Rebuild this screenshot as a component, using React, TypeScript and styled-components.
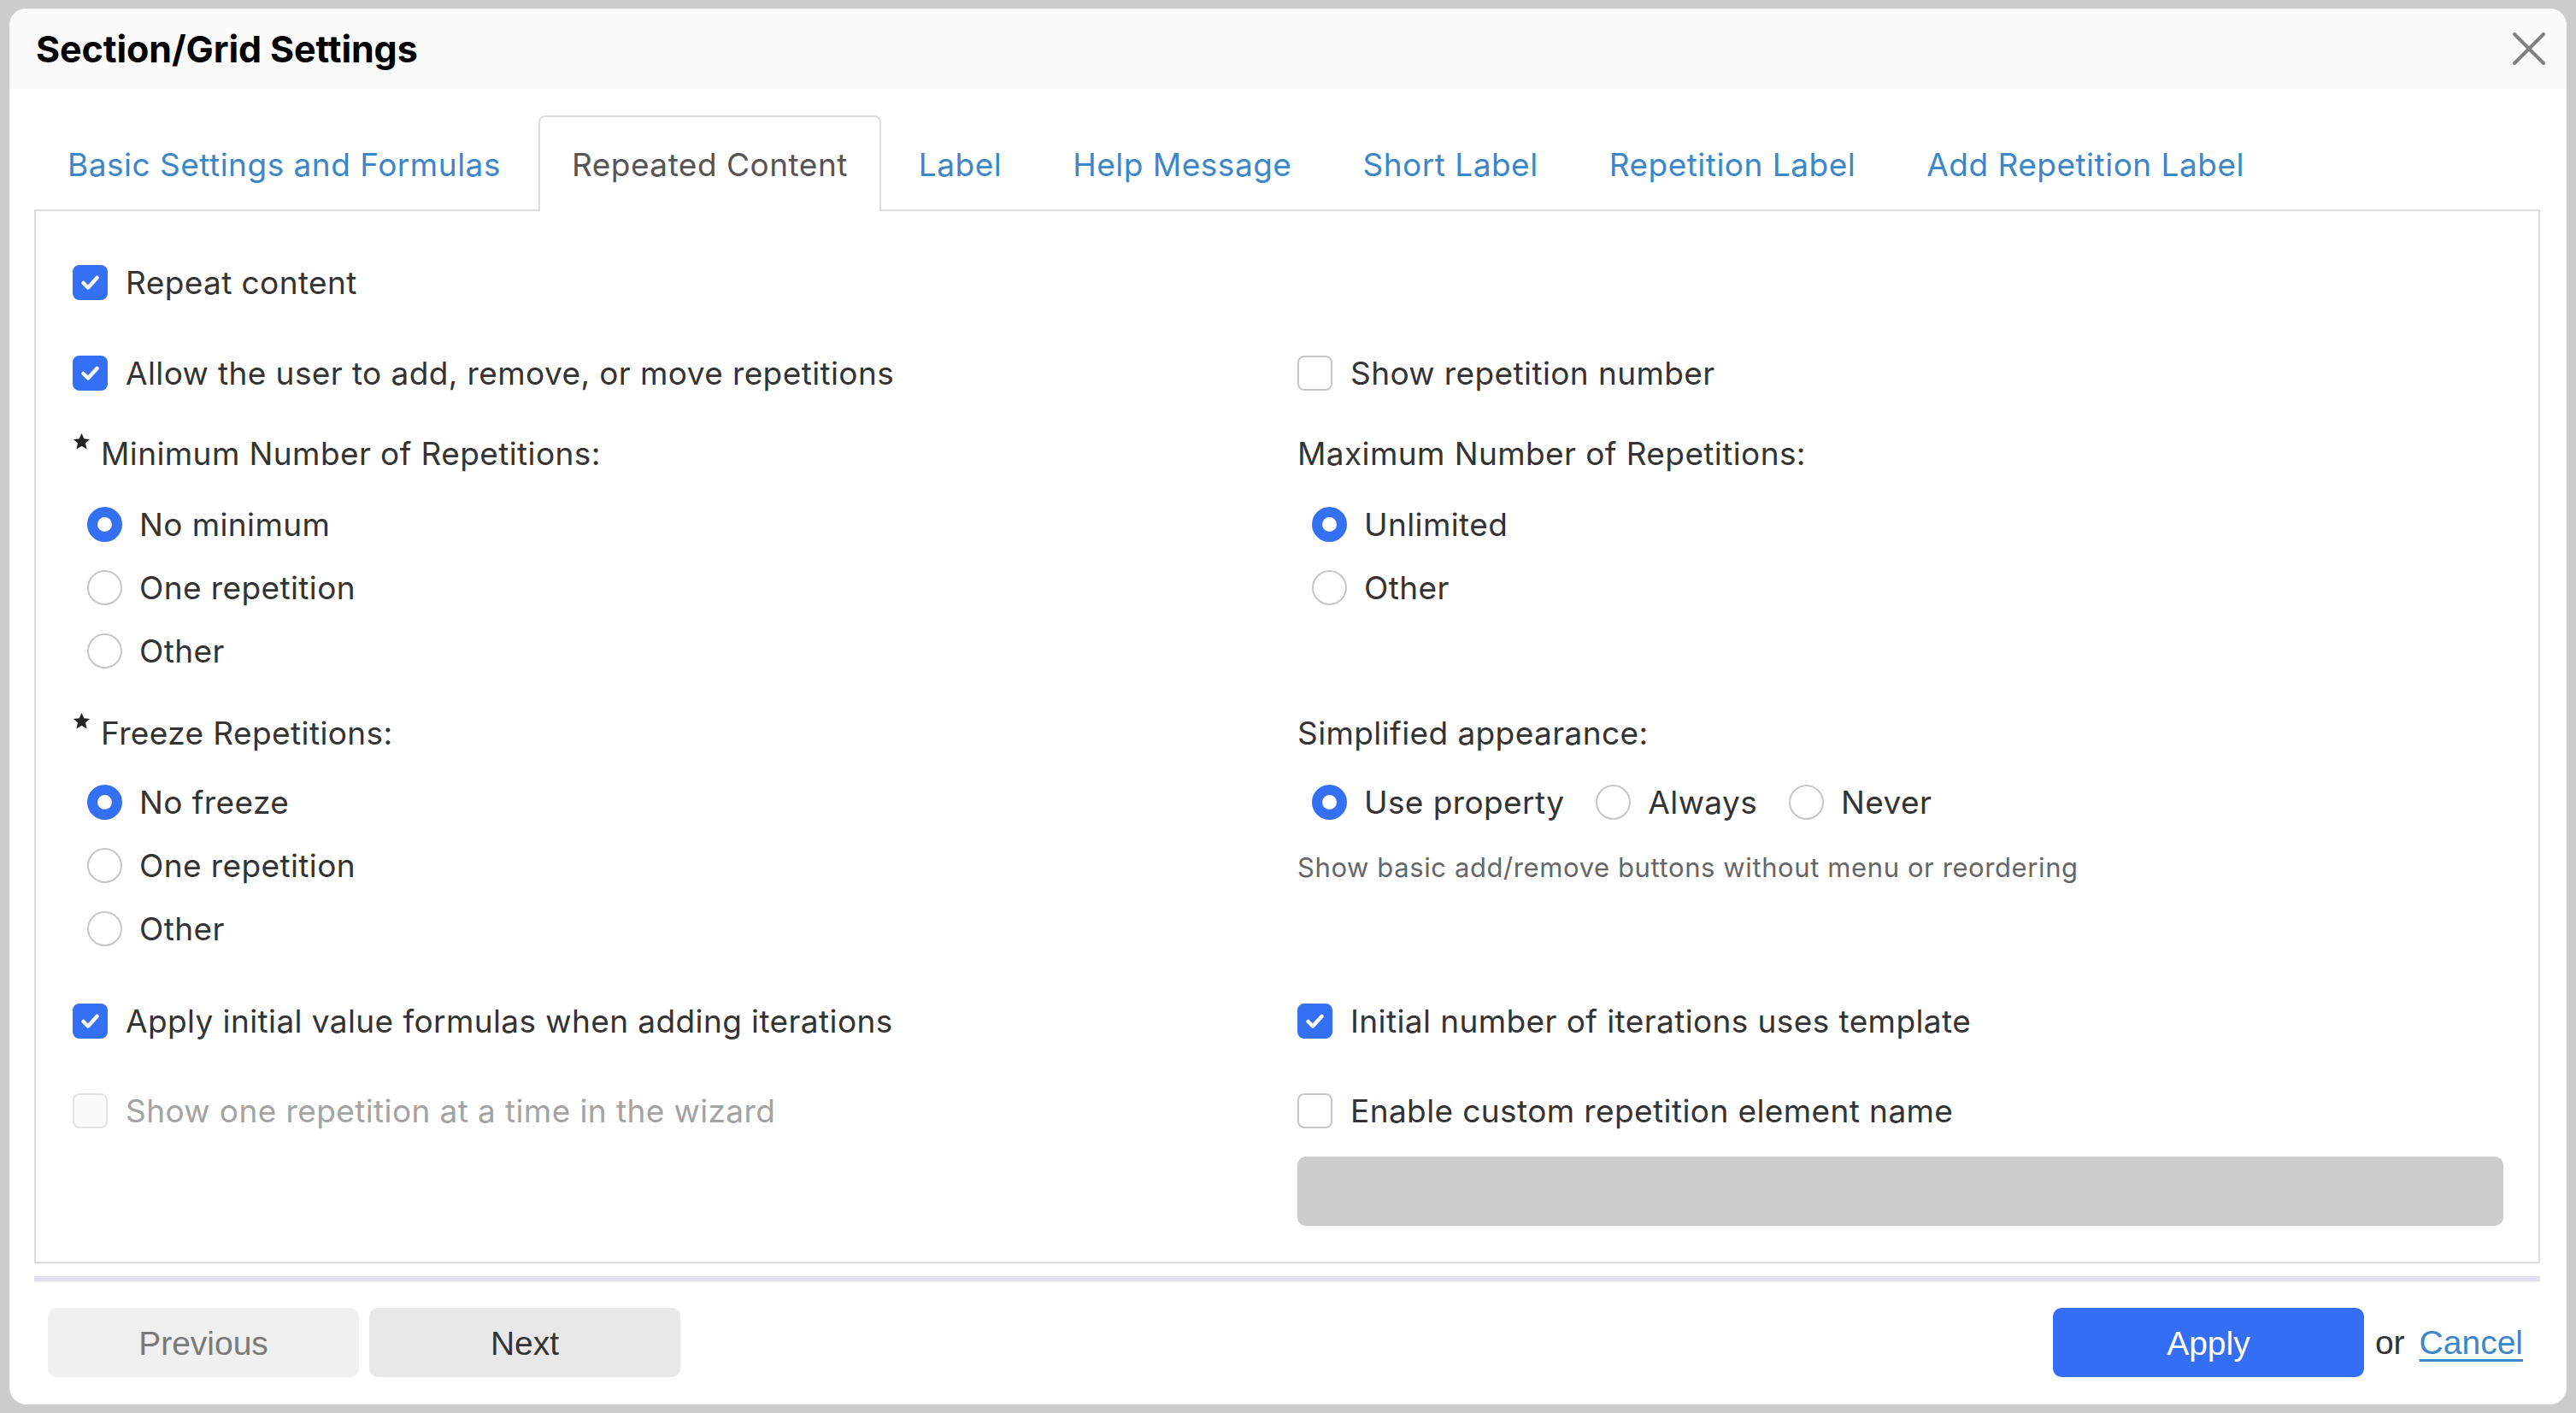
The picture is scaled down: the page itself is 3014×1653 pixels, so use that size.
import React from "react";
import styled, { createGlobalStyle, css } from "styled-components";

const GlobalStyle = createGlobalStyle`
  html, body { margin: 0; padding: 0; background: #cccccc; }
  body { font-family: Inter, "Noto Sans", "DejaVu Sans", sans-serif; color: #333; }
  * { box-sizing: border-box; }
`;

const BLUE = "#3470f4";

const textBase = css`
  font-size: 37px;
  letter-spacing: 0.4px;
`;

const Page = styled.div`
  padding: 10px 11px;
`;

const Dialog = styled.div`
  background: #ffffff;
  border-radius: 20px;
  overflow: hidden;
`;

const Header = styled.div`
  height: 94px;
  background: #fafafa;
  display: flex;
  align-items: center;
  justify-content: space-between;
  padding: 0 25px 0 31px;
`;

const Title = styled.h1`
  margin: 0;
  font-size: 43px;
  font-weight: 700;
  color: #000;
  letter-spacing: -0.1px;
`;

const CloseButton = styled.button`
  width: 38px;
  height: 38px;
  padding: 0;
  border: none;
  background: none;
  display: flex;
`;

const Body = styled.div`
  padding: 31px 31px 0 29px;
`;

const TabBar = styled.div`
  display: flex;
  gap: 5px;
  margin-bottom: -2px;
  position: relative;
  z-index: 1;
`;

const Tab = styled.div<{ $active?: boolean }>`
  height: 112px;
  padding: 0 37px;
  display: flex;
  align-items: center;
  ${textBase};
  letter-spacing: 0.5px;
  border: 2px solid transparent;
  border-bottom: none;
  border-radius: 8px 8px 0 0;
  color: #3b87c9;
  ${(p) =>
    p.$active &&
    css`
      border-color: #dddddd;
      background: #ffffff;
      color: #555555;
    `}
`;

const Panel = styled.div`
  border: 2px solid #dddddd;
  padding: 58px 41px 42px 43px;
`;

const Row = styled.div<{ $mt?: number }>`
  display: grid;
  grid-template-columns: 1fr 1fr;
  column-gap: 22px;
  margin-top: ${(p) => p.$mt ?? 0}px;
`;

const Cell = styled.div`
  display: flex;
  flex-direction: column;
  min-width: 0;
`;

const CheckLabel = styled.label<{ $disabled?: boolean }>`
  display: flex;
  align-items: center;
  gap: 21px;
  height: 50px;
  ${textBase};
  color: ${(p) => (p.$disabled ? "#a3a3a3" : "#333333")};
`;

const Box = styled.span<{ $checked?: boolean; $disabled?: boolean }>`
  width: 41px;
  height: 41px;
  flex: none;
  border-radius: 8px;
  display: flex;
  align-items: center;
  justify-content: center;
  background: ${(p) => (p.$checked ? BLUE : p.$disabled ? "#fbfbfb" : "#ffffff")};
  border: ${(p) =>
    p.$checked ? "none" : p.$disabled ? "2px solid #e4e4e4" : "2px solid #c6c6c6"};
`;

const GroupLabel = styled.div`
  display: flex;
  align-items: center;
  gap: 12px;
  height: 50px;
  ${textBase};
  color: #333333;
`;

const StarMark = styled.svg`
  width: 21px;
  height: 21px;
  flex: none;
  align-self: flex-start;
  margin-top: 1px;
`;

const RadioList = styled.div<{ $mt: number; $inline?: boolean }>`
  display: flex;
  flex-direction: ${(p) => (p.$inline ? "row" : "column")};
  gap: ${(p) => (p.$inline ? 37 : 24)}px;
  margin-top: ${(p) => p.$mt}px;
  padding-left: 17px;
`;

const RadioLabel = styled.label`
  display: flex;
  align-items: center;
  gap: 20px;
  height: 50px;
  ${textBase};
  color: #333333;
`;

const Dot = styled.span<{ $checked?: boolean }>`
  width: 41px;
  height: 41px;
  flex: none;
  border-radius: 50%;
  background: #ffffff;
  border: ${(p) => (p.$checked ? `12.5px solid ${BLUE}` : "2px solid #c6c6c6")};
`;

const Hint = styled.div`
  margin-top: 32px;
  font-size: 31px;
  letter-spacing: 0.6px;
  line-height: 40px;
  color: #666666;
`;

const NameInput = styled.input`
  margin-top: 29px;
  width: 100%;
  height: 81px;
  border: none;
  border-radius: 10px;
  background: #cccccc;
`;

const Divider = styled.div`
  margin-top: 15px;
  height: 6px;
  background: #e0e0f0;
`;

const Footer = styled.div`
  display: flex;
  align-items: center;
  justify-content: space-between;
  padding: 31px 20px 32px 16px;
`;

const ButtonGroup = styled.div`
  display: flex;
  align-items: center;
  gap: 12px;
`;

const Button = styled.button<{ $variant: "muted" | "plain" | "primary" }>`
  width: 364px;
  height: 81px;
  padding-top: 3px;
  border: none;
  border-radius: 10px;
  font-family: "Liberation Sans", Arial, sans-serif;
  font-size: 39px;
  ${(p) =>
    p.$variant === "muted"
      ? css`
          background: #f0f0f0;
          color: #7a7a7a;
        `
      : p.$variant === "plain"
      ? css`
          background: #e8e8e8;
          color: #333333;
        `
      : css`
          background: #346ef4;
          color: #ffffff;
        `}
`;

const Actions = styled.div`
  display: flex;
  align-items: center;
  gap: 13px;
  font-family: "Liberation Sans", Arial, sans-serif;
  font-size: 39px;
`;

const OrText = styled.span`
  color: #333333;
  margin-right: 4px;
`;

const CancelLink = styled.a`
  color: #3b87c9;
  text-decoration: underline;
  text-underline-offset: 6px;
  text-decoration-thickness: 3px;
`;

const CheckMark = () => (
  <svg width="41" height="41" viewBox="0 0 41 41">
    <path
      d="M12.5 21 L18 26.5 L28.5 15"
      fill="none"
      stroke="#fff"
      strokeWidth="4.5"
      strokeLinecap="round"
      strokeLinejoin="round"
    />
  </svg>
);

const Check: React.FC<{ label: string; checked?: boolean; disabled?: boolean }> = ({
  label,
  checked,
  disabled,
}) => (
  <CheckLabel $disabled={disabled}>
    <Box $checked={checked} $disabled={disabled}>
      {checked && <CheckMark />}
    </Box>
    {label}
  </CheckLabel>
);

const Radio: React.FC<{ label: string; checked?: boolean }> = ({ label, checked }) => (
  <RadioLabel>
    <Dot $checked={checked} />
    {label}
  </RadioLabel>
);

const Star = () => (
  <StarMark viewBox="0 0 24 24">
    <path
      d="M12 1 L15.2 8.3 L23 9 L17.1 14.3 L18.9 22.2 L12 18.1 L5.1 22.2 L6.9 14.3 L1 9 L8.8 8.3 Z"
      fill="#222"
    />
  </StarMark>
);

const tabs = [
  "Basic Settings and Formulas",
  "Repeated Content",
  "Label",
  "Help Message",
  "Short Label",
  "Repetition Label",
  "Add Repetition Label",
];

export default function App() {
  return (
    <>
      <GlobalStyle />
      <Page>
        <Dialog>
          <Header>
            <Title>Section/Grid Settings</Title>
            <CloseButton aria-label="Close">
              <svg width="38" height="38" viewBox="0 0 38 38">
                <path
                  d="M2 2 L36 36 M36 2 L2 36"
                  stroke="#808080"
                  strokeWidth="4"
                  strokeLinecap="round"
                />
              </svg>
            </CloseButton>
          </Header>
          <Body>
            <TabBar>
              {tabs.map((t) => (
                <Tab key={t} $active={t === "Repeated Content"}>
                  {t}
                </Tab>
              ))}
            </TabBar>
            <Panel>
              <Row>
                <Cell>
                  <Check label="Repeat content" checked />
                </Cell>
              </Row>
              <Row $mt={56}>
                <Cell>
                  <Check label="Allow the user to add, remove, or move repetitions" checked />
                </Cell>
                <Cell>
                  <Check label="Show repetition number" />
                </Cell>
              </Row>
              <Row $mt={44}>
                <Cell>
                  <GroupLabel>
                    <Star />
                    Minimum Number of Repetitions:
                  </GroupLabel>
                  <RadioList $mt={33}>
                    <Radio label="No minimum" checked />
                    <Radio label="One repetition" />
                    <Radio label="Other" />
                  </RadioList>
                </Cell>
                <Cell>
                  <GroupLabel>Maximum Number of Repetitions:</GroupLabel>
                  <RadioList $mt={33}>
                    <Radio label="Unlimited" checked />
                    <Radio label="Other" />
                  </RadioList>
                </Cell>
              </Row>
              <Row $mt={46}>
                <Cell>
                  <GroupLabel>
                    <Star />
                    Freeze Repetitions:
                  </GroupLabel>
                  <RadioList $mt={31}>
                    <Radio label="No freeze" checked />
                    <Radio label="One repetition" />
                    <Radio label="Other" />
                  </RadioList>
                </Cell>
                <Cell>
                  <GroupLabel>Simplified appearance:</GroupLabel>
                  <RadioList $mt={31} $inline>
                    <Radio label="Use property" checked />
                    <Radio label="Always" />
                    <Radio label="Never" />
                  </RadioList>
                  <Hint>Show basic add/remove buttons without menu or reordering</Hint>
                </Cell>
              </Row>
              <Row $mt={58}>
                <Cell>
                  <Check label="Apply initial value formulas when adding iterations" checked />
                </Cell>
                <Cell>
                  <Check label="Initial number of iterations uses template" checked />
                </Cell>
              </Row>
              <Row $mt={55}>
                <Cell>
                  <Check label="Show one repetition at a time in the wizard" disabled />
                </Cell>
                <Cell>
                  <Check label="Enable custom repetition element name" />
                  <NameInput disabled aria-label="Custom repetition element name" />
                </Cell>
              </Row>
            </Panel>
            <Divider />
            <Footer>
              <ButtonGroup>
                <Button $variant="muted">Previous</Button>
                <Button $variant="plain">Next</Button>
              </ButtonGroup>
              <Actions>
                <Button $variant="primary">Apply</Button>
                <OrText>or</OrText>
                <CancelLink href="#">Cancel</CancelLink>
              </Actions>
            </Footer>
          </Body>
        </Dialog>
      </Page>
    </>
  );
}
